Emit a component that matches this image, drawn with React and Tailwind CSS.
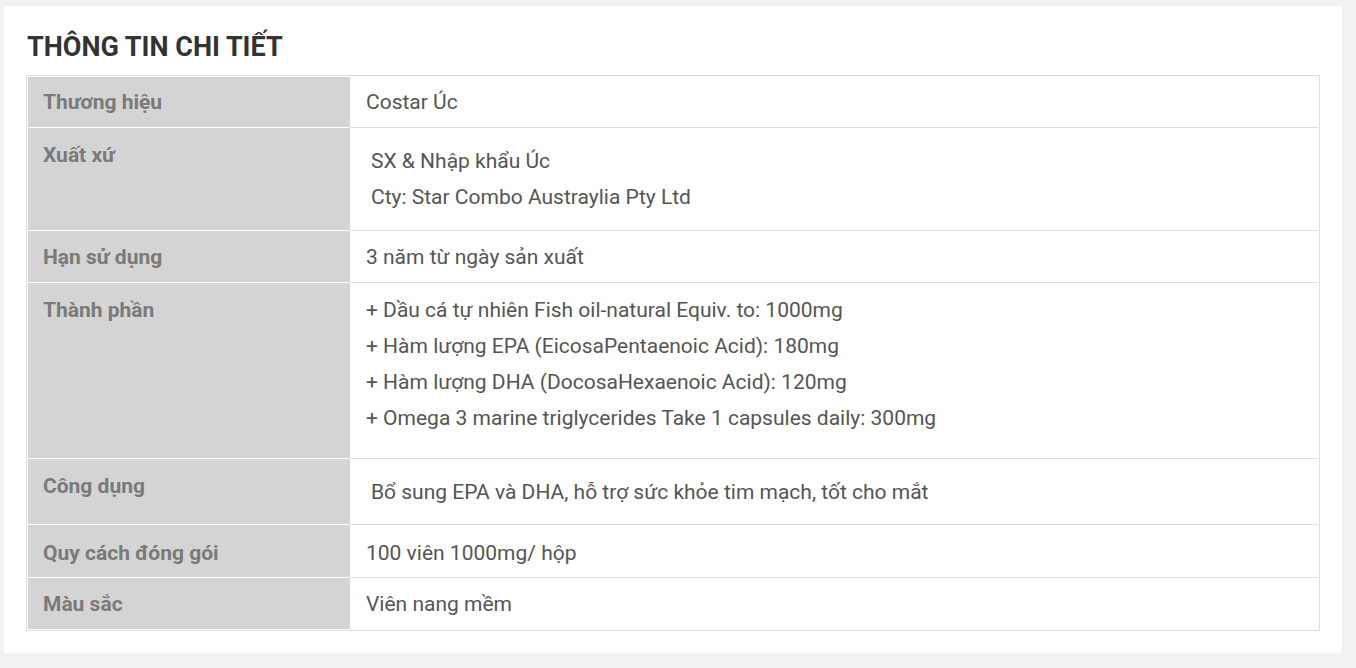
export default function App() {
  const font = { fontFamily: 'Roboto, "Noto Sans", sans-serif' };
  const rows = [
    { label: "Thương hiệu", lines: ["Costar Úc"], lp: "pt-3 pb-3", vp: "pt-3 pb-3", vlh: "leading-[26px]", indent: "" },
    { label: "Xuất xứ", lines: ["SX & Nhập khẩu Úc", "Cty: Star Combo Austraylia Pty Ltd"], lp: "pt-[14px]", vp: "pt-[15px] pb-[15px]", vlh: "leading-[36px]", indent: "pl-[5px]" },
    { label: "Hạn sử dụng", lines: ["3 năm từ ngày sản xuất"], lp: "pt-[13px] pb-3", vp: "pt-[13px] pb-3", vlh: "leading-[26px]", indent: "" },
    { label: "Thành phần", lines: ["+ Dầu cá tự nhiên Fish oil-natural Equiv. to: 1000mg", "+ Hàm lượng EPA (EicosaPentaenoic Acid): 180mg", "+ Hàm lượng DHA (DocosaHexaenoic Acid): 120mg", "+ Omega 3 marine triglycerides Take 1 capsules daily: 300mg"], lp: "pt-[14px]", vp: "pt-[9px] pb-[22px]", vlh: "leading-[36px]", indent: "" },
    { label: "Công dụng", lines: ["Bổ sung EPA và DHA, hỗ trợ sức khỏe tim mạch, tốt cho mắt"], lp: "pt-[14px]", vp: "pt-[15px] pb-[14px]", vlh: "leading-[36px]", indent: "pl-[5px]" },
    { label: "Quy cách đóng gói", lines: ["100 viên 1000mg/ hộp"], lp: "pt-[15px] pb-[11px]", vp: "pt-[15px] pb-[11px]", vlh: "leading-[26px]", indent: "" },
    { label: "Màu sắc", lines: ["Viên nang mềm"], lp: "pt-[13px] pb-3", vp: "pt-[13px] pb-3", vlh: "leading-[26px]", indent: "" },
  ];
  return (
    <div className="min-h-[668px] w-full bg-[#f2f2f2] pt-[6px] pl-[4px] pr-[14px] pb-[15px]" style={font}>
      <div className="bg-white pl-[22px] pr-[22px] pt-[26px] pb-[22px]">
        <h2 className="text-[27px] font-bold leading-[30px] text-[#333] pl-[1px] mb-[13px]">THÔNG TIN CHI TIẾT</h2>
        <div className="border border-[#dddddd] p-px bg-white">
          {rows.map((r, i) => (
            <div key={i} className="flex">
              <div className={`w-[322px] shrink-0 bg-[#d4d4d4] pl-[15px] pr-3 ${i > 0 ? "border-t border-white" : ""} ${r.lp}`}>
                <div className="text-[21px] font-bold leading-[26px] text-[#7a7a7a]">{r.label}</div>
              </div>
              <div className={`flex-1 pl-4 pr-3 ${i > 0 ? "border-t border-[#dddddd]" : ""} ${r.vp}`}>
                {r.lines.map((l, j) => (
                  <div key={j} className={`text-[21px] text-[#555] ${r.vlh} ${r.indent}`}>{l}</div>
                ))}
              </div>
            </div>
          ))}
        </div>
      </div>
    </div>
  );
}
